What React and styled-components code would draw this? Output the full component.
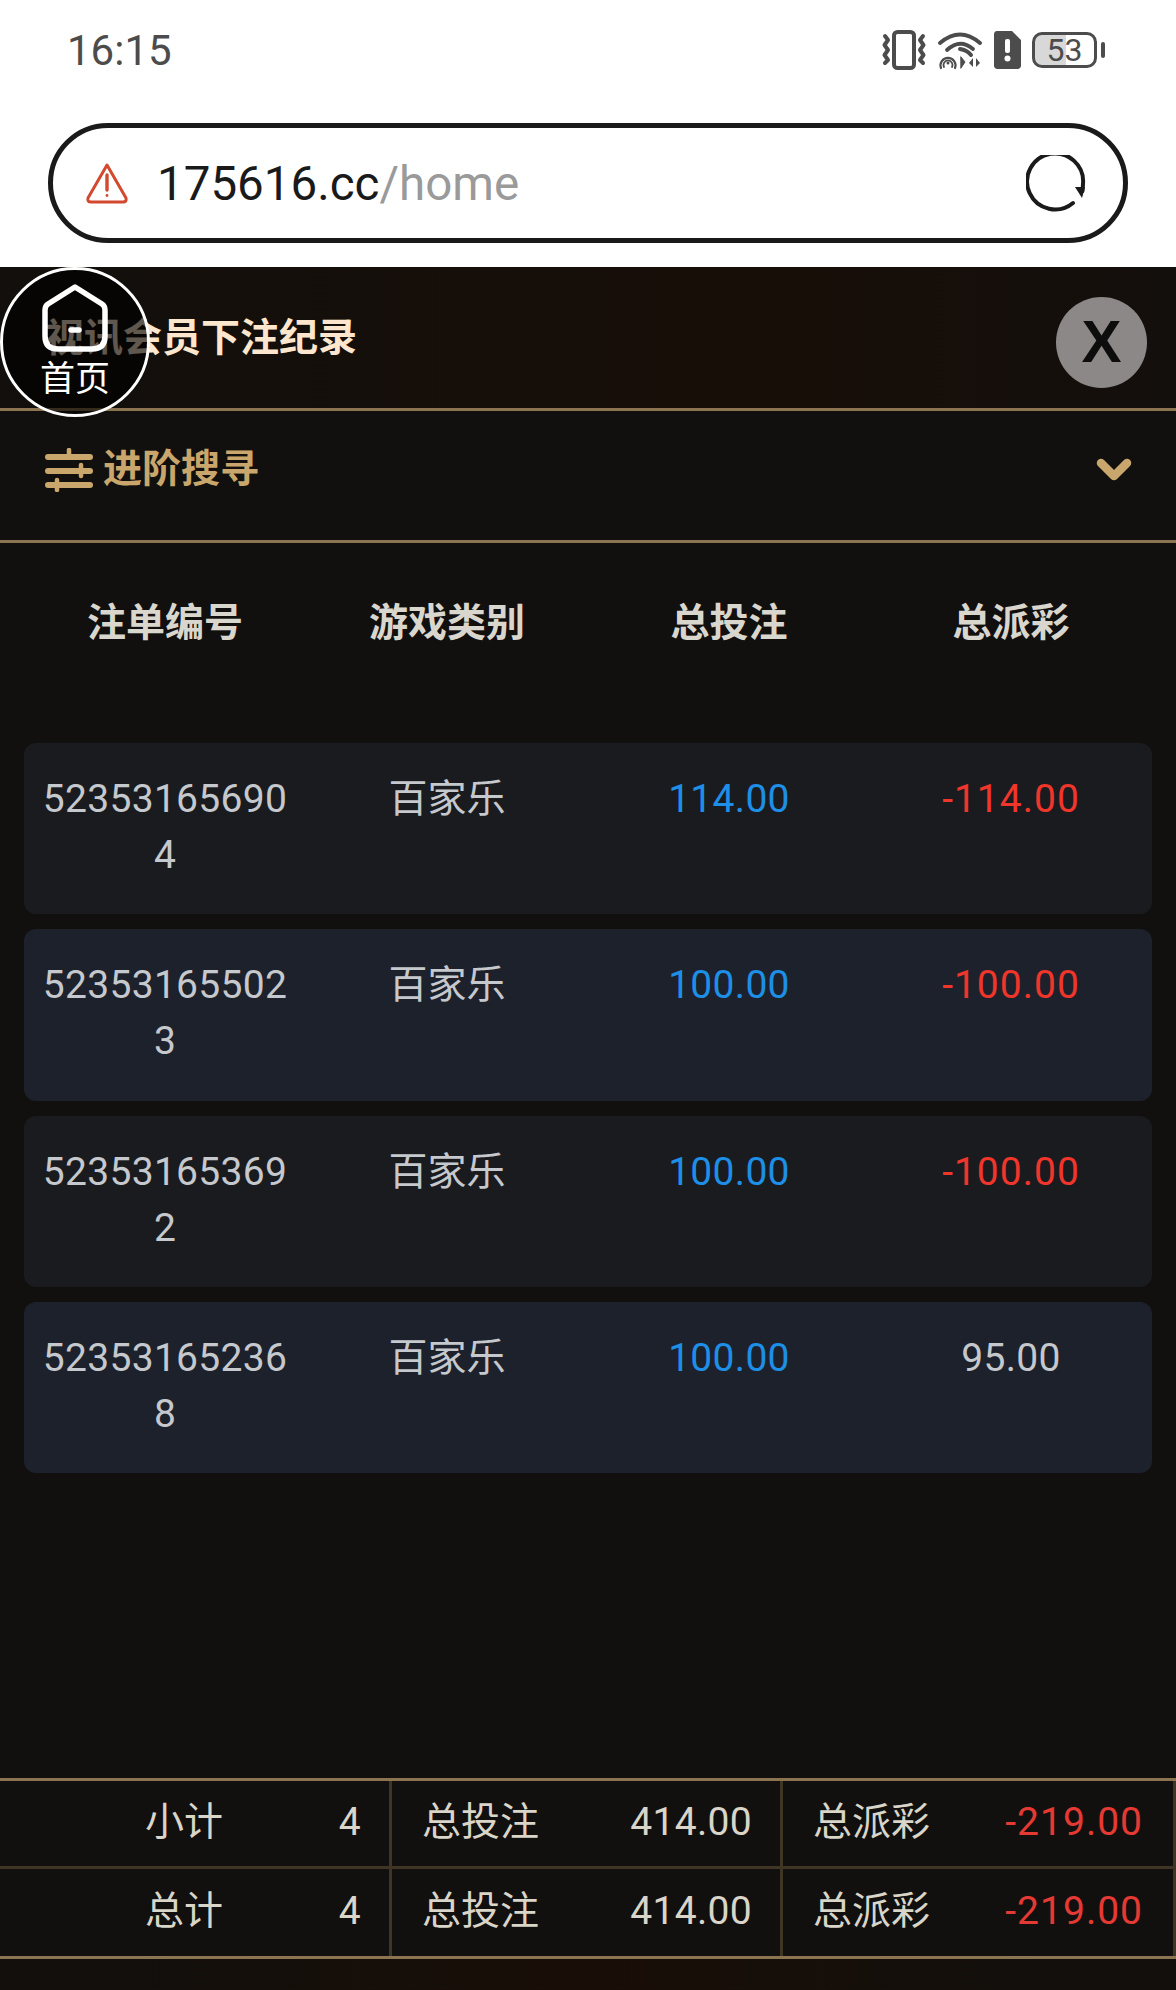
import React from 'react';
import styled, { createGlobalStyle } from 'styled-components';

const GlobalStyle = createGlobalStyle`
  html, body {
    margin: 0;
    padding: 0;
    background: #12100e;
    font-family: Roboto, "Noto Sans CJK SC", sans-serif;
  }
  * {
    box-sizing: border-box;
  }
`;

const Screen = styled.div`
  position: relative;
  display: flex;
  flex-direction: column;
  width: 1176px;
  height: 1990px;
  overflow: hidden;
  background: #12100e;
`;

// --- BROWSER CHROME ---

const Chrome = styled.div`
  height: 267px;
  padding: 0 48px;
  background: #ffffff;
`;

const StatusBar = styled.div`
  display: flex;
  align-items: center;
  justify-content: space-between;
  height: 100px;
  padding: 0 23px 0 19px;
`;

const Clock = styled.span`
  font-size: 42px;
  color: #4c4c4c;
`;

const StatusIcons = styled.div`
  display: flex;
  align-items: center;
  gap: 11px;
`;

const Battery = styled.div`
  position: relative;
  width: 65px;
  height: 36px;
  border: 3px solid #4c4c4c;
  border-radius: 10px;
  margin-right: 8px;
  background: linear-gradient(90deg, #d8d8d8 ${p => p.$level}%, #ffffff ${p => p.$level}%);
  color: #4c4c4c;
  font-size: 32px;
  line-height: 30px;
  text-align: center;

  &::after {
    content: '';
    position: absolute;
    top: 7px;
    right: -11px;
    width: 4px;
    height: 16px;
    border-radius: 2px;
    background: #4c4c4c;
  }
`;

const AddressBar = styled.div`
  display: flex;
  align-items: center;
  height: 120px;
  margin-top: 23px;
  padding: 0 37px 0 32px;
  border: 5px solid #1a1a1a;
  border-radius: 60px;
`;

const Url = styled.div`
  flex: 1;
  margin-left: 28px;
  padding-top: 2px;
  font-size: 47.5px;
  font-weight: 400;
  color: #1a1a1a;

  span {
    color: #9a9a9a;
  }
`;

const ReloadWrap = styled.div`
  display: flex;
  margin-top: 3px;
`;

// --- PAGE HEADER ---

const PageHeader = styled.header`
  display: flex;
  align-items: center;
  justify-content: space-between;
  height: 144px;
  padding: 0 29px 0 45px;
  border-bottom: 3px solid #8b744f;
  background: linear-gradient(90deg, #120f0c 0%, #180e08 65%, #130f0c 100%);
`;

const PageTitle = styled.h1`
  margin: 0 0 7px;
  font-size: 39px;
  font-weight: 700;
  color: #fce6cd;
`;

const CloseButton = styled.button`
  width: 91px;
  height: 91px;
  margin-top: 9px;
  padding: 0;
  border: 0;
  border-radius: 50%;
  background: #8b8887;
  color: #0d0d0d;
  font-family: "Liberation Sans", sans-serif;
  font-size: 60px;
  font-weight: 700;
  line-height: 88px;
`;

const HomeFloat = styled.div`
  position: absolute;
  top: 267px;
  left: 0;
  display: flex;
  flex-direction: column;
  align-items: center;
  gap: 8px;
  width: 150px;
  height: 150px;
  padding-top: 14px;
  border: 3px solid #ffffff;
  border-radius: 50%;
  background: rgba(0, 0, 0, 0.62);
  color: #ffffff;
  font-size: 35px;
  line-height: 40px;
`;

// --- SEARCH BAR ---

const SearchBar = styled.div`
  display: flex;
  align-items: center;
  justify-content: space-between;
  height: 132px;
  padding: 0 44px 12px 45px;
  border-bottom: 3px solid #8b744f;
`;

const SearchLabel = styled.div`
  display: flex;
  align-items: center;
  gap: 10px;
  font-size: 39px;
  font-weight: 700;
  color: #c9a66b;
`;

const SearchText = styled.span`
  transform: translateY(-5px);
`;

// --- TABLE ---

const Table = styled.div`
  padding: 0 24px;
`;

const Columns = styled.div`
  display: grid;
  grid-template-columns: repeat(4, 1fr);
  text-align: center;
`;

const HeadRow = styled(Columns)`
  height: 200px;
  padding-top: 52px;
  font-size: 39px;
  font-weight: 700;
  line-height: 56px;
  color: #d9d6ce;
`;

const BetList = styled.div`
  display: flex;
  flex-direction: column;
  gap: 15px;
`;

const BetRow = styled(Columns)`
  height: 171.33px;
  padding-top: 28px;
  border-radius: 12px;
  background: ${p => (p.$alt ? '#1d212b' : '#1a1b1f')};
  font-size: 39px;
  line-height: 56px;
  color: #c5c8cc;
`;

const Cell = styled.div`
  padding: 0 10px;
  color: ${p => p.$color || 'inherit'};
`;

const BetNumber = styled(Cell)`
  word-break: break-all;
  letter-spacing: 0.3px;
`;

const Amount = styled(Cell)`
  letter-spacing: ${p => (p.$wide ? '1px' : '0.3px')};
`;

// --- SUMMARY ---

const Summary = styled.div`
  display: grid;
  grid-template-columns: 392px 391px 1fr;
  grid-auto-rows: 87.5px;
  margin-top: auto;
  margin-bottom: 31px;
  border-top: 3px solid #8b744f;
  border-bottom: 3px solid #8b744f;
  font-size: 39px;
  color: #d9d5c9;
`;

const SumCell = styled.div`
  display: flex;
  align-items: center;
  justify-content: space-between;
  padding: 0 ${p => p.$right || '28px'} 5px ${p => p.$left || '30px'};
  border-right: 3px solid #3f3524;
  border-bottom: ${p => (p.$bottom ? '3px solid #3f3524' : '0')};
`;

const SumLabel = styled.span`
  padding-bottom: 5px;
`;

const SumValue = styled.span`
  padding-top: 3px;
  letter-spacing: ${p => (p.$wide ? '1px' : '0.3px')};
  color: ${p => p.$color || 'inherit'};
`;

const BottomGlow = styled.div`
  position: absolute;
  left: 0;
  right: 0;
  bottom: 0;
  height: 31px;
  background: linear-gradient(90deg, #120f0c 10%, #190e07 50%, #120f0c 90%);
`;

// --- ICONS ---

const VibrateIcon = () => (
  <svg width="44" height="40" viewBox="0 0 44 40" fill="none" stroke="#4c4c4c" strokeWidth="4" strokeLinecap="round" strokeLinejoin="round">
    <rect x="12" y="2" width="20" height="36" rx="3.5" />
    <path d="M3 6 L6 10 L2.5 15 L6 20 L2.5 25 L6 30 L3 33" />
    <path d="M41 6 L38 10 L41.5 15 L38 20 L41.5 25 L38 30 L41 33" />
  </svg>
);

const WifiIcon = () => (
  <svg width="46" height="40" viewBox="0 0 44 40" fill="none" stroke="#4c4c4c" strokeLinecap="round">
    <path d="M2 13 Q22 -4 42 13" strokeWidth="3.8" />
    <path d="M9 20 Q22 8 35 19" strokeWidth="3.8" />
    <path d="M22 19 Q29 20 33 25" strokeWidth="4" />
    <path d="M3 38 A7.5 7.5 0 1 1 17 38" strokeWidth="2.2" />
    <path d="M6 37 A4.5 4.5 0 1 1 14 37" strokeWidth="1.8" />
    <circle cx="10" cy="33" r="1.5" fill="#4c4c4c" stroke="none" />
    <path d="M23 27 L27 32 L23 38 Z" fill="#4c4c4c" strokeWidth="1" />
    <path d="M35 28 L35 37 L31 33 Z M38 28 L38 37 L42 33 Z" fill="#4c4c4c" stroke="none" />
  </svg>
);

const SimIcon = () => (
  <svg width="27" height="38" viewBox="0 0 27 38">
    <path d="M3 0 H18 L27 9 V34 A3.5 3.5 0 0 1 23.5 38 H3.5 A3.5 3.5 0 0 1 0 34 V3.5 A3.5 3.5 0 0 1 3 0 Z" fill="#4c4c4c" />
    <rect x="11" y="8" width="5" height="14" rx="2" fill="#ffffff" />
    <circle cx="13.5" cy="27.5" r="3" fill="#ffffff" />
  </svg>
);

const WarningIcon = () => (
  <svg width="44" height="42" viewBox="0 0 44 42" fill="none" stroke="#d2492f" strokeWidth="3" strokeLinejoin="round">
    <path d="M22 3 L41 36 Q42 40 38 40 H6 Q2 40 3 36 Z" />
    <path d="M22 13 V28" strokeWidth="3.4" strokeLinecap="round" />
    <circle cx="22" cy="33.5" r="1.4" fill="#d2492f" stroke="none" />
  </svg>
);

const ReloadIcon = () => (
  <svg width="60" height="60" viewBox="0 0 60 60" fill="none" stroke="#1a1a1a" strokeWidth="4" strokeLinecap="round">
    <path d="M47 48 A28 28 0 1 1 57 29 L56.5 36" />
    <path d="M49 32 L59 32 L56 43 Z" fill="#1a1a1a" stroke="none" />
  </svg>
);

const HomeIcon = () => (
  <svg width="66" height="68" viewBox="0 0 66 68" fill="none" stroke="#ffffff" strokeWidth="5.5" strokeLinecap="round" strokeLinejoin="round">
    <path d="M33 3 L60 20 Q63 22 63 26 V52 Q63 65 50 65 H16 Q3 65 3 52 V26 Q3 22 6 20 Z" />
    <path d="M29 46 H37" />
  </svg>
);

const FilterIcon = () => (
  <svg width="48" height="44" viewBox="0 0 48 44" fill="none" stroke="#c9a66b" strokeWidth="6" strokeLinecap="round">
    <path d="M3 9 H45" />
    <path d="M3 23 H45" />
    <path d="M3 37 H45" />
    <path d="M24 2 V9" strokeWidth="4.5" />
    <path d="M36 17 V28" strokeWidth="4.5" />
    <path d="M12 32 V42" strokeWidth="4.5" />
  </svg>
);

const ChevronIcon = () => (
  <svg width="36" height="26" viewBox="0 0 36 26" fill="none" stroke="#c9a66b" strokeWidth="8.5" strokeLinecap="round" strokeLinejoin="round">
    <path d="M5 6 L18 19 L31 6" />
  </svg>
);

// --- DATA ---

const bets = [
  { id: '523531656904', bet: '114.00', payout: '-114.00', lost: true },
  { id: '523531655023', bet: '100.00', payout: '-100.00', lost: true },
  { id: '523531653692', bet: '100.00', payout: '-100.00', lost: true },
  { id: '523531652368', bet: '100.00', payout: '95.00', lost: false },
];

const totals = [
  { label: '小计', count: '4' },
  { label: '总计', count: '4' },
];

const App = () => (
  <Screen>
    <GlobalStyle />
    <Chrome>
      <StatusBar>
        <Clock>16:15</Clock>
        <StatusIcons>
          <VibrateIcon />
          <WifiIcon />
          <SimIcon />
          <Battery $level={53}>53</Battery>
        </StatusIcons>
      </StatusBar>
      <AddressBar>
        <WarningIcon />
        <Url>175616.cc<span>/home</span></Url>
        <ReloadWrap>
          <ReloadIcon />
        </ReloadWrap>
      </AddressBar>
    </Chrome>

    <PageHeader>
      <PageTitle>视讯会员下注纪录</PageTitle>
      <CloseButton>X</CloseButton>
    </PageHeader>
    <HomeFloat>
      <HomeIcon />
      首页
    </HomeFloat>

    <SearchBar>
      <SearchLabel>
        <FilterIcon />
        <SearchText>进阶搜寻</SearchText>
      </SearchLabel>
      <ChevronIcon />
    </SearchBar>

    <Table>
      <HeadRow>
        <div>注单编号</div>
        <div>游戏类别</div>
        <div>总投注</div>
        <div>总派彩</div>
      </HeadRow>
      <BetList>
        {bets.map((b, i) => (
          <BetRow key={b.id} $alt={i % 2 === 1}>
            <BetNumber>{b.id}</BetNumber>
            <Cell>百家乐</Cell>
            <Amount $color="#1e8fe6">{b.bet}</Amount>
            <Amount $color={b.lost ? '#f0352b' : undefined} $wide={b.lost}>{b.payout}</Amount>
          </BetRow>
        ))}
      </BetList>
    </Table>

    <Summary>
      {totals.map((t, i) => (
        <React.Fragment key={t.label}>
          <SumCell $left="145px" $bottom={i === 0}>
            <SumLabel>{t.label}</SumLabel>
            <SumValue>{t.count}</SumValue>
          </SumCell>
          <SumCell $bottom={i === 0}>
            <SumLabel>总投注</SumLabel>
            <SumValue>414.00</SumValue>
          </SumCell>
          <SumCell $right="30px" $bottom={i === 0}>
            <SumLabel>总派彩</SumLabel>
            <SumValue $color="#e53a33" $wide>-219.00</SumValue>
          </SumCell>
        </React.Fragment>
      ))}
    </Summary>
    <BottomGlow />
  </Screen>
);

export default App;
